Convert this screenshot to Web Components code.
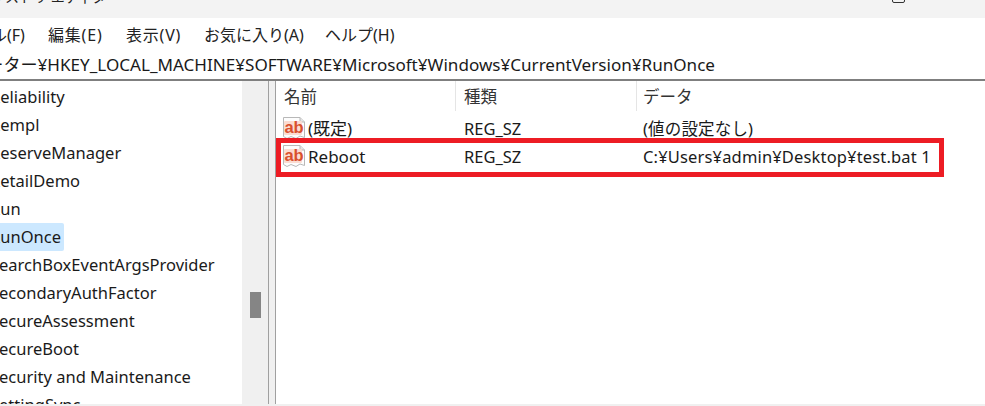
<!DOCTYPE html>
<html>
<head>
<meta charset="utf-8">
<style>
  html, body { margin: 0; height: 100%; overflow: hidden; background: #fff; }
  body { font: 16px "Noto Sans", "Noto Sans CJK JP", sans-serif; color: #1a1a1a; }
</style>
</head>
<body>
<reg-window>
  <reg-titlebar slot="title">レジストリ エディター</reg-titlebar>
  <reg-menubar slot="menu"></reg-menubar>
  <reg-address slot="address">コンピューター¥HKEY_LOCAL_MACHINE¥SOFTWARE¥Microsoft¥Windows¥CurrentVersion¥RunOnce</reg-address>
  <reg-tree slot="tree"></reg-tree>
  <reg-list slot="list"></reg-list>
</reg-window>

<script>
const font = '"Noto Sans", "Noto Sans CJK JP", sans-serif'

class RegWindow extends HTMLElement {
  constructor() {
    super()
    this.attachShadow({ mode: 'open' })
    this.shadowRoot.innerHTML = `
      <style>
        :host { display: flex; flex-direction: column; width: 985px; height: 406px; overflow: hidden; }
        .panes { flex: 1; min-height: 0; display: flex; border-top: 2px solid #7f7f7f; border-bottom: 2px solid #f0f0f0; }
        .tree { width: 268px; flex: none; }
        .split { width: 6px; flex: none; background: #f0f0f0; border-left: 1px solid #a0a0a0; border-right: 1px solid #a0a0a0; }
        .list { flex: 1; min-width: 0; }
      </style>
      <slot name="title"></slot>
      <slot name="menu"></slot>
      <slot name="address"></slot>
      <div class="panes">
        <div class="tree"><slot name="tree"></slot></div>
        <div class="split"></div>
        <div class="list"><slot name="list"></slot></div>
      </div>`
  }
}

class RegTitlebar extends HTMLElement {
  constructor() {
    super()
    this.attachShadow({ mode: 'open' })
    this.shadowRoot.innerHTML = `
      <style>
        :host { display: flex; height: 18px; background: #f3f3f3; overflow: hidden; align-items: flex-end; justify-content: space-between; padding: 0 80px 0 0; }
        .t { font: 14px/30px ${font}; margin: 0 0 6px -23px; color: #222; white-space: nowrap; }
        .max { width: 11px; height: 11px; border: 1px solid #333; border-radius: 2px; margin-bottom: 15px; }
      </style>
      <span class="t"><slot></slot></span>
      <span class="max"></span>`
  }
}

class RegMenubar extends HTMLElement {
  constructor() {
    super()
    this.attachShadow({ mode: 'open' })
    const items = ['ファイル(F)', '編集(E)', '表示(V)', 'お気に入り(A)', 'ヘルプ(H)']
    this.shadowRoot.innerHTML = `
      <style>
        :host { display: block; height: 32px; background: #fff; overflow: hidden; }
        .row { display: grid; grid-template-columns: 105px 78px 78px 121px auto; margin-left: -57px; height: 32px; align-items: center; font: 16px ${font}; color: #222; white-space: nowrap; }
        .wide { letter-spacing: .8px; }
      </style>
      <div class="row">${items.map(i => `<span class="${i.length < 6 ? 'wide' : ''}">${i}</span>`).join('')}</div>`
  }
}

class RegAddress extends HTMLElement {
  constructor() {
    super()
    this.attachShadow({ mode: 'open' })
    this.shadowRoot.innerHTML = `
      <style>
        :host { display: block; height: 29px; overflow: hidden; background: #fff; }
        .a { margin-left: -82px; font: 17.08px/30px ${font}; color: #1a1a1a; white-space: nowrap; }
      </style>
      <div class="a"><slot></slot></div>`
  }
}

class RegTree extends HTMLElement {
  constructor() {
    super()
    this.attachShadow({ mode: 'open' })
    const names = ['Reliability', 'Rempl', 'ReserveManager', 'RetailDemo', 'Run', 'RunOnce',
      'SearchBoxEventArgsProvider', 'SecondaryAuthFactor', 'SecureAssessment', 'SecureBoot',
      'Security and Maintenance', 'SettingSync']
    this.shadowRoot.innerHTML = `
      <style>
        :host { display: flex; height: 100%; overflow: hidden; }
        ul { flex: 1; min-width: 0; margin: 0; padding: 2px 0 0; list-style: none; overflow: hidden; background: #fff; }
        li { height: 28px; line-height: 28px; font-size: 16.5px; white-space: nowrap; }
        li span { display: inline-block; height: 28px; margin-left: -10px; padding-right: 3px; border-radius: 2px; }
        li.sel span { background: #cce8ff; }
        .bar { width: 26px; flex: none; background: #f0f0f0; padding-top: 211px; box-sizing: border-box; display: flex; justify-content: center; }
        .thumb { width: 11px; height: 26px; background: #858585; }
      </style>
      <ul>${names.map(n => `<li class="${n === 'RunOnce' ? 'sel' : ''}"><span>${n}</span></li>`).join('')}</ul>
      <div class="bar"><div class="thumb"></div></div>`
  }
}

class RegIcon extends HTMLElement {
  constructor() {
    super()
    this.attachShadow({ mode: 'open' })
    this.shadowRoot.innerHTML = `
      <style>:host { display: block; width: 24px; height: 24px; flex: none; margin-bottom: 3px; } svg { display: block; }</style>
      <svg width="24" height="24" viewBox="0 0 24 24">
        <path d="M1.5 1.5H18L22.5 6V21.5L18 20 14 22.5 9 20.5 5 22.5 1.5 20.5Z" fill="#fdfdfd" stroke="#b8b8b8"/>
        <path d="M18 1.5V6H22.5" fill="#e4e4e4" stroke="#b8b8b8"/>
        <rect x="2" y="5" width="18" height="14" rx="1" fill="#fbdcd2"/>
        <text x="2.4" y="17.4" font-family="Liberation Sans, sans-serif" font-weight="700" font-size="16.5" fill="#d9502e">ab</text>
      </svg>`
  }
}

class RegRow extends HTMLElement {
  constructor() {
    super()
    this.attachShadow({ mode: 'open' })
    this.shadowRoot.innerHTML = `
      <style>
        :host { display: grid; grid-template-columns: 180px 181px 1fr; height: 28px; line-height: 28px; font-size: 17px; white-space: nowrap; }
        .name { display: flex; align-items: center; padding-left: 6px; gap: 2px; }
        .c { padding-left: 8px; font-size: 16.5px; }
        .d { padding-left: 6px; letter-spacing: .16px; }
      </style>
      <div class="name"><reg-icon></reg-icon><span>${this.getAttribute('name')}</span></div>
      <div class="c">${this.getAttribute('type')}</div>
      <div class="c d">${this.getAttribute('data')}</div>`
  }
}

class RegList extends HTMLElement {
  constructor() {
    super()
    this.attachShadow({ mode: 'open' })
    this.shadowRoot.innerHTML = `
      <style>
        :host { display: block; position: relative; height: 100%; background: #fff; }
        .head { display: grid; grid-template-columns: 180px 181px 1fr; height: 34px; font-size: 16.5px; line-height: 32px; color: #333; }
        .head div { padding-left: 8px; border-right: 1px solid #e5e5e5; box-sizing: border-box; height: 30px; }
        .head div:last-child { border: 0; padding-left: 6px; }
        .mark { position: absolute; left: 0; top: 57px; width: 658px; height: 29px; border: 5px solid #ed1c24; pointer-events: none; }
      </style>
      <div class="head"><div>名前</div><div>種類</div><div>データ</div></div>
      <reg-row name="(既定)" type="REG_SZ" data="(値の設定なし)"></reg-row>
      <reg-row name="Reboot" type="REG_SZ" data="C:¥Users¥admin¥Desktop¥test.bat 1"></reg-row>
      <div class="mark"></div>`
  }
}

customElements.define('reg-icon', RegIcon)
customElements.define('reg-row', RegRow)
customElements.define('reg-window', RegWindow)
customElements.define('reg-titlebar', RegTitlebar)
customElements.define('reg-menubar', RegMenubar)
customElements.define('reg-address', RegAddress)
customElements.define('reg-tree', RegTree)
customElements.define('reg-list', RegList)
</script>
</body>
</html>
